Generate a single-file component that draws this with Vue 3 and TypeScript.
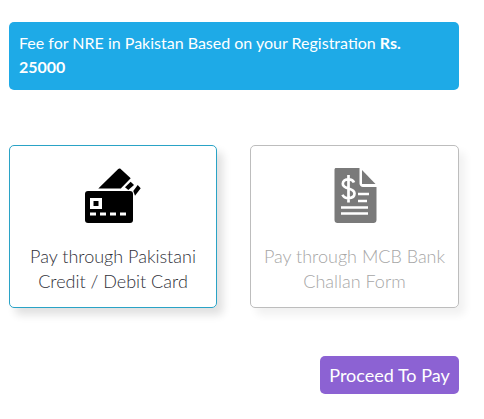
<script setup lang="ts">
interface Option {
  id: string
  lines: string[]
  active: boolean
}
const options: Option[] = [
  { id: 'card', lines: ['Pay through Pakistani', 'Credit / Debit Card'], active: true },
  { id: 'challan', lines: ['Pay through MCB Bank', 'Challan Form'], active: false },
]
</script>

<template>
  <main class="page">
    <div class="alert">Fee for NRE in Pakistan Based on your Registration <b>Rs.</b> <b>25000</b></div>
    <section class="options">
      <div v-for="o in options" :key="o.id" class="option" :class="{ active: o.active }">
        <svg v-if="o.id === 'card'" class="icon" viewBox="0 0 56 56" width="56" height="56">
          <path d="M13.300 20.500 33.200 1c.7-.7 1.700-.8 2.500-.1L45.700 10.300 36.700 19.500l-.8 1z" fill="#000"/>
          <path d="M40 19.300 45.700 13.700 49 17 43.300 22z" fill="#000"/>
          <path d="M48.300 23 52.700 17 55.700 20.300 50 27.700z" fill="#000"/>
          <rect x="0" y="23" width="48" height="32" rx="3" fill="#000"/>
          <path d="M5 30h12v11H5zM8.500 33v5h5v-5z" fill="#fff" fill-rule="evenodd"/>
          <rect x="5" y="44.500" width="6" height="3" fill="#fff"/>
          <rect x="15" y="44.500" width="6" height="3" fill="#fff"/>
          <rect x="25" y="44.500" width="6" height="3" fill="#fff"/>
          <rect x="35" y="44.500" width="6" height="3" fill="#fff"/>
        </svg>
        <svg v-else class="icon" viewBox="0 0 56 56" width="56" height="56">
          <path d="M9 0h23.500v15.500c0 1.900 1.600 3.500 3.500 3.500h13.500v33c0 1.700-1.300 3-3 3H10.500c-1.700 0-3-1.300-3-3V1.500C7.500.700 8.200 0 9 0z" fill="#7a7a7a"/>
          <path d="M35 2 48.500 16H35z" fill="#7a7a7a"/>
          <path d="M27 14.500c-.8-2-3-3.200-5.500-3.200-3 0-5.700 1.600-5.700 4.500 0 6.200 11.700 3.300 11.700 9.800 0 3-2.700 4.500-6 4.500-2.800 0-5-1.200-6-3.400M21.500 7v27.500" fill="none" stroke="#fff" stroke-width="2.700"/>
          <path d="M31 26h11M31 33h9M14 39.500h27M14 45.500h27" fill="none" stroke="#fff" stroke-width="2.500"/>
        </svg>
        <p class="label"><span v-for="l in o.lines" :key="l" class="line">{{ l }}</span></p>
      </div>
    </section>
    <div class="actions">
      <button class="proceed" type="button">Proceed To Pay</button>
    </div>
  </main>
</template>

<style scoped>
.page {
  width: 484px;
  height: 419px;
  box-sizing: border-box;
  padding: 22px 25px 0 9px;
  font-family: Lato, "Open Sans", sans-serif;
  background: #fff;
  display: flex;
  flex-direction: column;
}
.alert {
  height: 68px;
  box-sizing: border-box;
  padding: 9px 10px 0 10px;
  background: #1eaae7;
  color: #fff;
  border-radius: 5px;
  font-size: 16px;
  line-height: 24px;
}
.alert b {
  font-weight: 700;
}
.options {
  display: flex;
  justify-content: space-between;
  margin-top: 55px;
}
.option {
  width: 208px;
  height: 163px;
  box-sizing: border-box;
  border: 1px solid #2aa3c6;
  border-radius: 5px;
  box-shadow: 6px 7px 9px rgba(0, 0, 0, 0.12);
  display: flex;
  flex-direction: column;
  align-items: center;
  padding-top: 22px;
  color: #2f2f38;
}
.option:not(.active) {
  width: 209px;
  border-color: #bdbdbd;
  box-shadow: 6px 7px 9px rgba(0, 0, 0, 0.06);
  color: #a6a6a6;
}
.icon {
  display: block;
  flex: none;
}
.label {
  margin: 20px 0 0;
  font-size: 18px;
  font-weight: 300;
  line-height: 25px;
  text-align: center;
}
.line {
  display: block;
}
.actions {
  display: flex;
  justify-content: flex-end;
  margin-top: 48px;
}
.proceed {
  width: 139px;
  height: 38px;
  border: 0;
  padding: 0;
  border-radius: 5px;
  background: #8c62d3;
  color: #fff;
  font-family: inherit;
  font-size: 18px;
}
</style>
